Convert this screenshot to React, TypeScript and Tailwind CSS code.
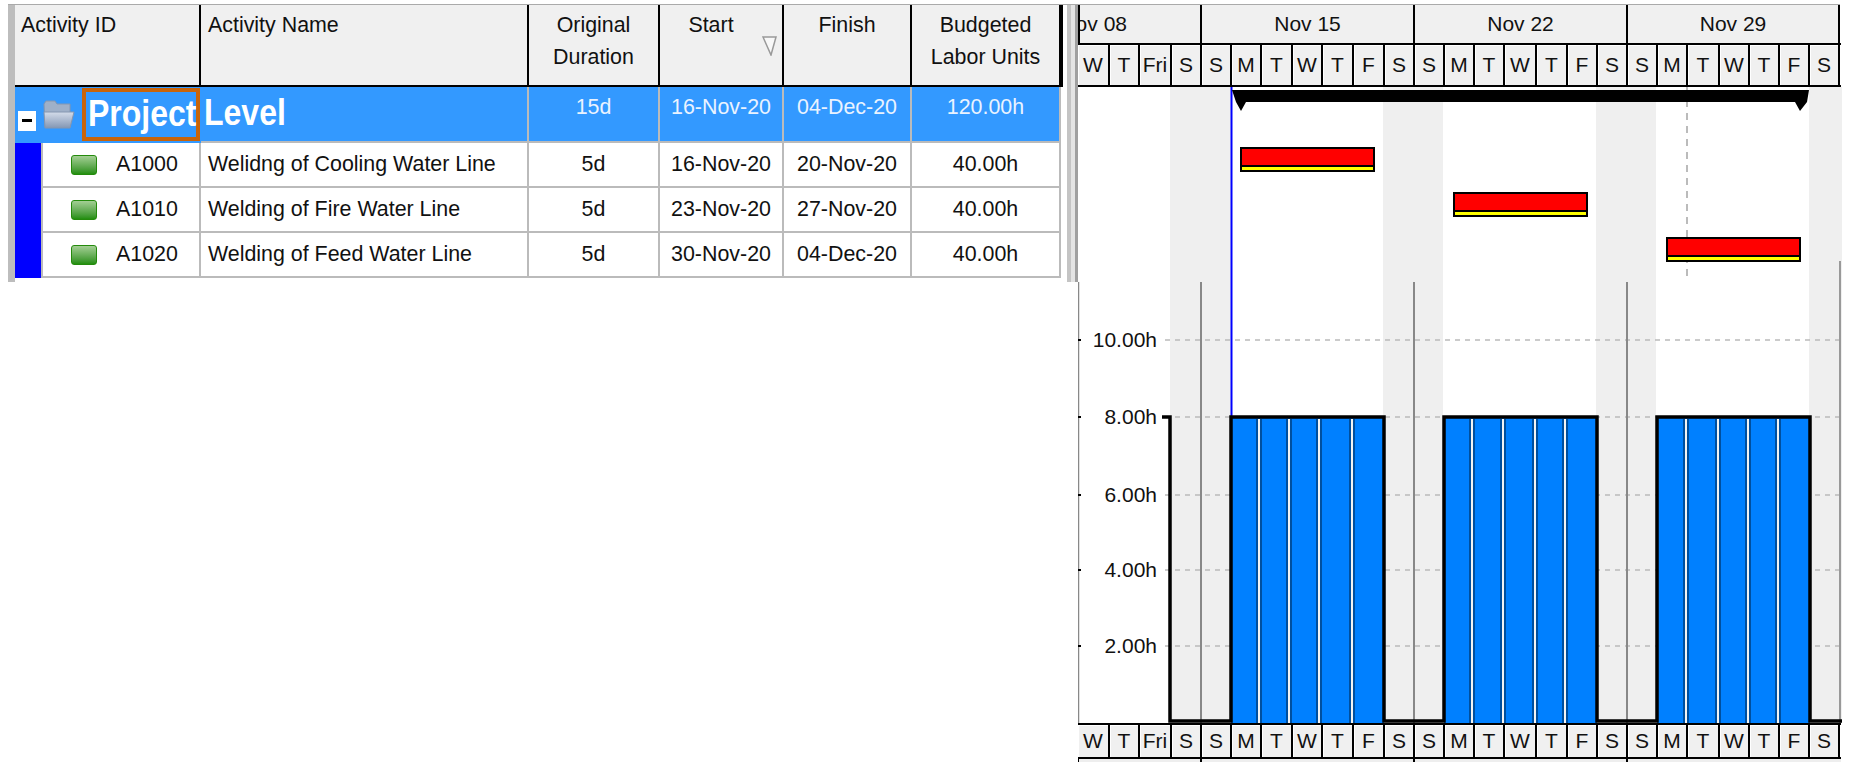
const days = ['W', 'T', 'Fri', 'S', 'S', 'M', 'T', 'W', 'T', 'F', 'S', 'S', 'M', 'T', 'W', 'T', 'F', 'S', 'S', 'M', 'T', 'W', 'T', 'F', 'S'];

const rows = [
  { id: 'A1000', name: 'Welidng of Cooling Water Line', start: '16-Nov-20', finish: '20-Nov-20' },
  { id: 'A1010', name: 'Welding of Fire Water Line', start: '23-Nov-20', finish: '27-Nov-20' },
  { id: 'A1020', name: 'Welding of Feed Water Line', start: '30-Nov-20', finish: '04-Dec-20' },
];

const tableCols = 'grid grid-cols-[186px_328px_131px_124px_128px_149px]';
const dayCols = 'grid grid-cols-[32px_30px_32px_30px_30px_30px_31px_30px_31px_31px_30px_30px_30px_30px_32px_31px_30px_30px_30px_30px_32px_30px_30px_30px_30px]';
const weekCols = 'grid grid-cols-[124px_213px_213px_212px]';

const headCell = 'border-r-2 border-black bg-[#f0f0f0] pt-1 text-[21.4px] leading-[32px] text-[#111]';
const cell = 'flex items-center justify-center border-r-2 border-b-2 border-[#bbb] bg-white text-[21.4px] text-[#111]';
const selCell = 'border-r-2 border-b-2 border-[#bbb] bg-[#3399ff] pt-1 text-center text-[21.4px] leading-[32px] text-[#eaf3ff]';
const weekCell = 'flex items-center justify-center border-r-2 border-black bg-[#f0f0f0] text-[21px] text-[#111]';

const weekends = [[92, 61], [305, 60], [518, 60], [731, 33]];
const gridY = [58, 135, 213, 288, 364];
const labels = [['10.00h', 58], ['8.00h', 135], ['6.00h', 213], ['4.00h', 288], ['2.00h', 364]] as const;
const weekLines = [123, 336, 549];
const separators = [181, 211, 241, 274, 394, 425, 457, 487, 608, 640, 670, 700];
const blocks = [[153, 153], [366, 153], [579, 153]];
const bars = [[162, 60], [375, 105], [588, 150]];

function MinusBox() {
  return (
    <div className="flex h-5 w-[18px] shrink-0 items-center justify-center bg-white">
      <div className="h-[3px] w-[10px] bg-black" />
    </div>
  );
}

function FolderIcon() {
  return (
    <svg className="ml-[7px] shrink-0" width="32" height="31" viewBox="0 0 32 31">
      <defs>
        <linearGradient id="folder" x1="0" y1="0" x2="0" y2="1">
          <stop offset="0" stopColor="#d4dcea" />
          <stop offset="1" stopColor="#8497b4" />
        </linearGradient>
      </defs>
      <path d="M1 5 L3 2 H12 L14 5 H27 V28 H2 Z" fill="#9fb0c8" stroke="#8496b0" />
      <path d="M1 13 H31 L27 29 H2 Z" fill="url(#folder)" stroke="#8496b0" />
    </svg>
  );
}

function TaskIcon() {
  return <div className="ml-[28px] h-5 w-[26px] shrink-0 rounded-[3px] border border-[#248a0c] bg-gradient-to-b from-[#a3cf94] to-[#218f0a]" />;
}

function SortMark() {
  return (
    <svg className="absolute top-[31px] left-[102px]" width="15" height="20" viewBox="0 0 15 20">
      <path d="M1 1 H14 L9 19 Z" fill="#f8f8f8" stroke="#999" strokeWidth="1.5" />
    </svg>
  );
}

function ActivityTable() {
  return (
    <div className="w-[1046px] shrink-0">
      <div className={`${tableCols} h-[82px] border-b-2 border-black`}>
        <div className={`${headCell} pl-[6px]`}>Activity ID</div>
        <div className={`${headCell} pl-[7px]`}>Activity Name</div>
        <div className={`${headCell} text-center`}>Original<br />Duration</div>
        <div className={`${headCell} relative pr-5 text-center`}>Start<SortMark /></div>
        <div className={`${headCell} text-center`}>Finish</div>
        <div className={`${headCell} text-center`}>Budgeted<br />Labor Units</div>
      </div>

      <div className={`${tableCols} h-14`}>
        <div className="flex items-center border-b-2 border-[#3399ff] bg-[#3399ff] pl-[3px]">
          <div className="mt-[13px]"><MinusBox /></div>
          <FolderIcon />
          <div className="ml-[7px] flex h-[53px] w-[118px] items-center border-4 border-[#c8640a] pl-[2px] text-[32px] font-bold text-white">
            <span className="-mt-[2px] scale-y-[1.14]">Project</span>
          </div>
        </div>
        <div className="flex items-center border-r-2 border-b-2 border-[#bbb] bg-[#3399ff] pl-[3px] text-[32px] font-bold text-white">
          <span className="-mt-[4px] scale-y-[1.14]">Level</span>
        </div>
        <div className={selCell}>15d</div>
        <div className={selCell}>16-Nov-20</div>
        <div className={selCell}>04-Dec-20</div>
        <div className={selCell}>120.00h</div>
      </div>

      {rows.map((row) => (
        <div key={row.id} className={`${tableCols} h-[45px]`}>
          <div className="flex bg-white">
            <div className="w-[26px] shrink-0 bg-[#0000ff]" />
            <div className="flex flex-1 items-center border-r-2 border-b-2 border-l-2 border-[#bbb] text-[21.4px] text-[#111]">
              <TaskIcon />
              <span className="ml-[19px]">{row.id}</span>
            </div>
          </div>
          <div className={`${cell} !justify-start pl-[7px]`}>{row.name}</div>
          <div className={cell}>5d</div>
          <div className={cell}>{row.start}</div>
          <div className={cell}>{row.finish}</div>
          <div className={cell}>40.00h</div>
        </div>
      ))}
    </div>
  );
}

function Splitter() {
  return (
    <div className="flex h-[277px] w-[17px] shrink-0">
      <div className="h-[82px] w-[2px] bg-black" />
      <div className="w-1" />
      <div className="w-1 bg-[#c4c4c4]" />
      <div className="w-1 bg-[#e4e4e4]" />
      <div className="w-[3px] bg-[#a0a0a0]" />
    </div>
  );
}

function DayRow({ height }: { height: string }) {
  return (
    <div className={`${dayCols} ${height} border-b-2 border-black`}>
      {days.map((d, i) => (
        <div key={i} className="flex items-center justify-center border-r-2 border-black bg-[#f0f0f0] text-[21px] text-[#111] shadow-[inset_1px_1px_0_#fff]">
          {d}
        </div>
      ))}
    </div>
  );
}

function GanttBars() {
  return (
    <svg className="block" width="764" height="195" viewBox="0 0 764 195">
      {weekends.map(([x, w]) => (
        <rect key={x} x={x} y="0" width={w} height="195" fill="#efefef" />
      ))}
      <line x1="609" y1="0" x2="609" y2="193" stroke="#bbb" strokeWidth="2" strokeDasharray="7 6" />
      <line x1="153.5" y1="0" x2="153.5" y2="195" stroke="#0000ff" strokeWidth="2" />
      <line x1="762" y1="174" x2="762" y2="195" stroke="#999" strokeWidth="2" />
      <path d="M154 3 H731 L729 15 L722 24 L717 15 H168 L163 24 L158 15 Z" fill="#000" />
      {bars.map(([x, y]) => (
        <g key={x}>
          <rect x={x} y={y} width="135" height="25" fill="#000" />
          <rect x={x + 2} y={y + 2} width="131" height="16" fill="#ff0000" />
          <rect x={x + 2} y={y + 20} width="131" height="3" fill="#ffff00" />
        </g>
      ))}
    </svg>
  );
}

function Histogram() {
  return (
    <svg className="block" width="764" height="441" viewBox="0 0 764 441" fontFamily="'Liberation Sans', sans-serif">
      {weekends.map(([x, w]) => (
        <rect key={x} x={x} y="0" width={w} height="441" fill="#efefef" />
      ))}
      {gridY.map((y) => (
        <line key={y} x1="87" y1={y} x2="762" y2={y} stroke="#bbb" strokeWidth="1.5" strokeDasharray="5 5" />
      ))}
      {weekLines.map((x) => (
        <line key={x} x1={x} y1="0" x2={x} y2="441" stroke="#888" strokeWidth="2" />
      ))}
      <line x1="0.5" y1="0" x2="0.5" y2="441" stroke="#888" strokeWidth="1.5" />
      <line x1="762" y1="0" x2="762" y2="441" stroke="#999" strokeWidth="2" />
      <line x1="153.5" y1="0" x2="153.5" y2="135" stroke="#0000ff" strokeWidth="2" />
      {blocks.map(([x, w]) => (
        <rect key={x} x={x} y="135" width={w} height="306" fill="#0080ff" />
      ))}
      {separators.map((x) => (
        <g key={x}>
          <rect x={x - 3} y="137" width="6" height="304" fill="#004f9e" />
          <rect x={x - 1} y="137" width="2" height="304" fill="#f4f4f4" />
        </g>
      ))}
      <path d="M84 135 H92 V439 H153 V135 H306 V439 H366 V135 H519 V439 H579 V135 H732 V439 H764" fill="none" stroke="#000" strokeWidth="3.5" />
      {labels.map(([text, y]) => (
        <g key={text}>
          <rect x="0" y={y - 1} width="3" height="2" fill="#000" />
          <text x="79" y={y + 7} textAnchor="end" fontSize="21" fill="#111">{text}</text>
        </g>
      ))}
    </svg>
  );
}

function TimeScale() {
  return (
    <div className="w-[763px] shrink-0">
      <div className={`${weekCols} h-[40px] border-b-2 border-black`}>
        <div className="flex items-center justify-end overflow-hidden border-r-2 border-l-2 border-black bg-[#f0f0f0] pr-[73px] text-[21px] whitespace-nowrap text-[#111]">Nov 08</div>
        <div className={weekCell}>Nov 15</div>
        <div className={weekCell}>Nov 22</div>
        <div className={weekCell}>Nov 29</div>
      </div>
      <DayRow height="h-[42px]" />
      <GanttBars />
      <Histogram />
      <div className="border-t-2 border-black">
        <DayRow height="h-[34px]" />
      </div>
      <div className={`${weekCols} h-[3px] bg-[#eee]`}>
        <div className="border-r-2 border-l border-black" />
        <div className="border-r-2 border-black" />
        <div className="border-r-2 border-black" />
        <div />
      </div>
    </div>
  );
}

export default function App() {
  return (
    <div className="h-[765px] w-[1849px] overflow-hidden bg-white pt-1 pl-2 font-['Liberation_Sans',sans-serif]">
      <div className="w-[1832px] border-t border-[#aaa]">
        <div className="flex items-start">
          <div className="h-[277px] w-[7px] shrink-0 bg-[#bdbdbd]" />
          <ActivityTable />
          <Splitter />
          <TimeScale />
        </div>
      </div>
    </div>
  );
}
